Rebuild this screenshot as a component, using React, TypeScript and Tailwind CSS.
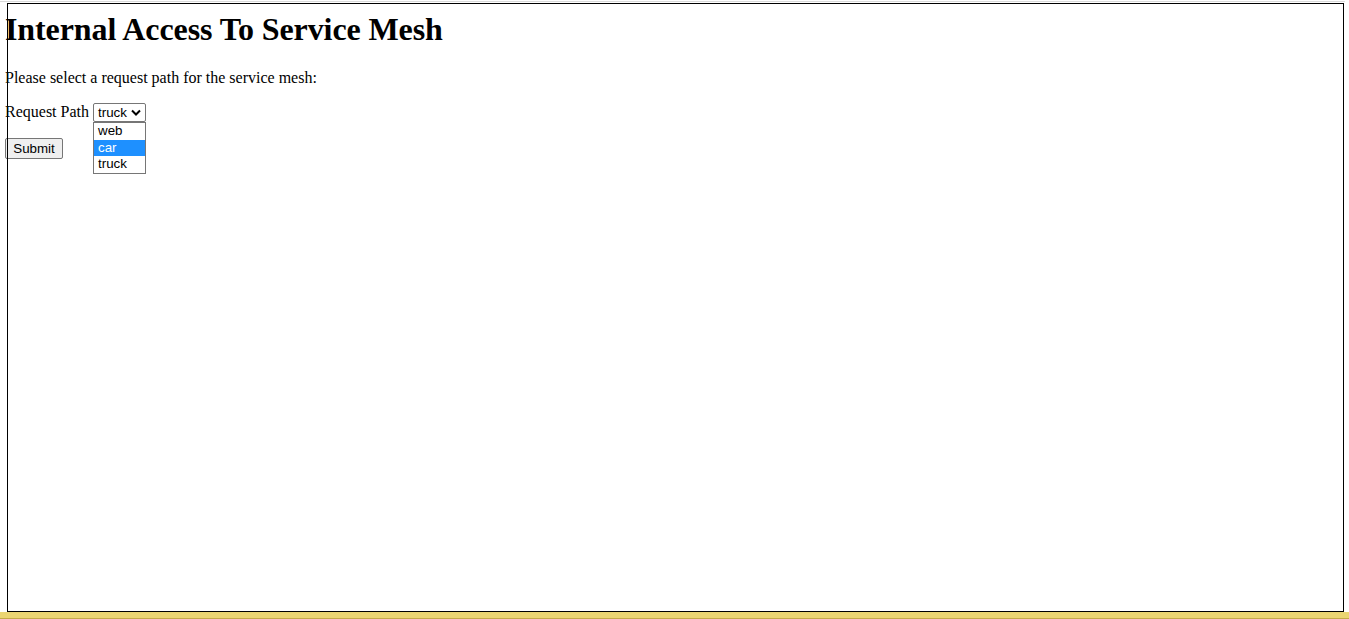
export default function App() {
  return (
    <div className="relative h-[619px] w-[1349px] overflow-hidden bg-white text-black">
      <div className="absolute left-0 top-[1px] h-[1px] w-[1345px] bg-[#d9d9d9]" />
      <div className="pointer-events-none absolute left-[7px] top-[3px] h-[609px] w-[1337px] border border-black" />
      <div className="pl-[5px] pt-[12px] font-['Liberation_Serif',serif]">
        <h1 className="text-[32px] font-bold leading-[35px] tracking-[-0.1px]">Internal Access To Service Mesh</h1>
        <p className="mt-[22px] text-[16px] leading-[18px]">Please select a request path for the service mesh:</p>
        <div className="relative mt-[16px] flex h-[19px] items-center text-[16px] leading-[18px]">
          <span className="-mt-[1px]">Request Path</span>
          <div className="ml-[4px] flex h-[19px] w-[53px] items-center rounded-[2px] border border-[#767676] pl-[4px] font-['Liberation_Sans',sans-serif] text-[13.33px] leading-[15px]">
            <span>truck</span>
            <svg className="ml-[4px]" width="10" height="7" viewBox="0 0 10 7">
              <path d="M1 1.5 L5 5.5 L9 1.5" fill="none" stroke="black" strokeWidth="2" />
            </svg>
          </div>
          <div className="absolute left-[88px] top-[19px] z-10 w-[53px] border border-[#767676] bg-white font-['Liberation_Sans',sans-serif] text-[13.33px] leading-[16px]">
            <div className="h-[17px] pl-[4px]">web</div>
            <div className="h-[16px] bg-[#1e90ff] pl-[4px] text-white">car</div>
            <div className="h-[17px] pl-[4px]">truck</div>
          </div>
        </div>
        <button className="mt-[16px] h-[21px] w-[58px] rounded-[2px] border border-[#767676] bg-[#efefef] font-['Liberation_Sans',sans-serif] text-[13.33px] leading-[15px]">
          Submit
        </button>
      </div>
      <div className="absolute bottom-0 left-0 h-[7px] w-full border-b border-[#c4a94a] bg-[#ebd572]" />
    </div>
  );
}
